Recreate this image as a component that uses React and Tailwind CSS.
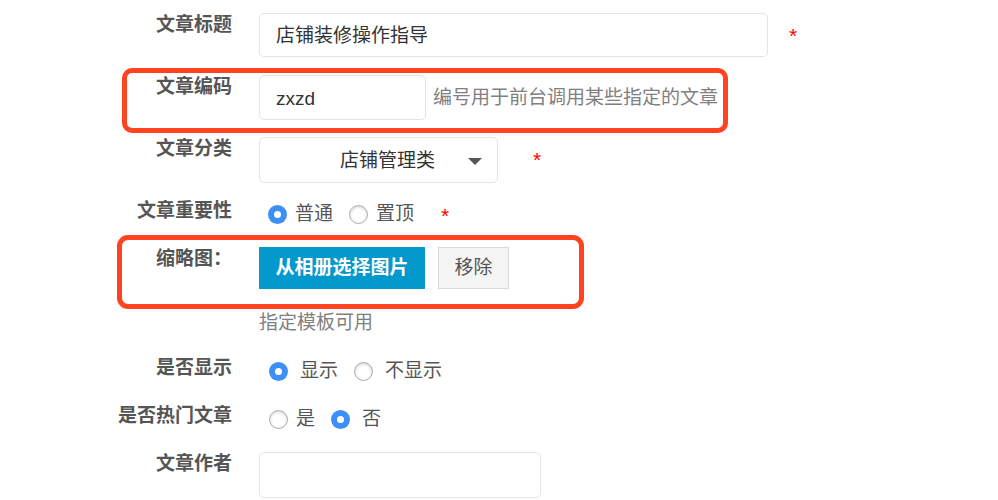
import React from 'react';

const font = { fontFamily: '"Liberation Sans", "Noto Sans CJK SC", sans-serif' };

const Label = ({ children }) => (
    <div className="w-[132px] shrink-0 text-right text-[19px] leading-[24px] font-semibold text-[#555]">
        {children}
    </div>
);

const Star = ({ className = '' }) => (
    <span className={`text-[21px] leading-none text-[#ff0000] ${className}`}>*</span>
);

const Radio = ({ checked }) =>
    checked ? (
        <span className="w-[19px] h-[19px] rounded-full bg-[#3b8ff6] flex items-center justify-center shrink-0">
            <span className="w-[7px] h-[7px] rounded-full bg-white" />
        </span>
    ) : (
        <span className="w-[19px] h-[19px] rounded-full bg-white border border-[#adadad] shadow-[inset_0_1px_3px_rgba(0,0,0,0.2)] shrink-0" />
    );

const Option = ({ checked, label, gap = 'ml-[8px]', className = '' }) => (
    <div className={`flex items-center ${className}`}>
        <Radio checked={checked} />
        <span className={`${gap} text-[19px] leading-[24px] text-[#555]`}>{label}</span>
    </div>
);

export default function App() {
    return (
        <div className="relative w-[998px] h-[500px] bg-white overflow-hidden" style={font}>
            <div className="pl-[100px] pt-[13px]">
                {/* 文章标题 */}
                <div className="flex items-start">
                    <Label>文章标题</Label>
                    <div className="ml-[27px] w-[509px] h-[44px] border border-[#dfe5e8] rounded-[5px] flex items-center pl-[16px] pt-[3px] text-[19px] text-[#333]">
                        店铺装修操作指导
                    </div>
                    <Star className="ml-[21px] mt-[12px]" />
                </div>

                {/* 文章编码 */}
                <div className="flex items-start mt-[18px]">
                    <Label>文章编码</Label>
                    <div className="ml-[27px] w-[167px] h-[45px] border border-[#dfe5e8] rounded-[5px] flex items-center pl-[16px] pt-[3px] text-[19px] text-[#333]">
                        zxzd
                    </div>
                    <span className="ml-[7px] mt-[11px] text-[19px] leading-[24px] text-[#808080]">编号用于前台调用某些指定的文章</span>
                </div>

                {/* 文章分类 */}
                <div className="flex items-start mt-[17px]">
                    <Label>文章分类</Label>
                    <div className="ml-[27px] w-[239px] h-[46px] border border-[#dfe5e8] rounded-[5px] flex items-center pt-[2px] text-[19px] text-[#333]">
                        <span className="ml-[80px]">店铺管理类</span>
                        <span className="ml-[33px] w-0 h-0 border-l-[7px] border-r-[7px] border-t-[7px] border-l-transparent border-r-transparent border-t-[#555]" />
                    </div>
                    <Star className="ml-[35px] mt-[12px]" />
                </div>

                {/* 文章重要性 */}
                <div className="flex items-start mt-[16px]">
                    <Label>文章重要性</Label>
                    <div className="ml-[36px] pt-[3px] flex items-center">
                        <Option checked label="普通" />
                        <Option label="置顶" className="ml-[16px]" />
                        <Star className="ml-[27px] mt-[2px]" />
                    </div>
                </div>

                {/* 缩略图 */}
                <div className="flex items-start mt-[21px]">
                    <Label>缩略图：</Label>
                    <div className="ml-[27px] flex">
                        <button className="h-[42px] w-[166px] bg-[#0399cc] text-white text-[19px] font-semibold">
                            从相册选择图片
                        </button>
                        <button className="ml-[13px] h-[42px] w-[71px] bg-[#f5f5f5] border border-[#dcdcdc] text-[#555] text-[19px]">
                            移除
                        </button>
                    </div>
                </div>

                <div className="ml-[159px] mt-[22px] text-[19px] leading-[24px] text-[#808080]">指定模板可用</div>

                {/* 是否显示 */}
                <div className="flex items-start mt-[21px]">
                    <Label>是否显示</Label>
                    <div className="ml-[37px] pt-[3px] flex items-center">
                        <Option checked label="显示" gap="ml-[12px]" />
                        <Option label="不显示" gap="ml-[12px]" className="ml-[16px]" />
                    </div>
                </div>

                {/* 是否热门文章 */}
                <div className="flex items-start mt-[21px]">
                    <Label>是否热门文章</Label>
                    <div className="ml-[37px] pt-[3px] flex items-center">
                        <Option label="是" />
                        <Option checked label="否" gap="ml-[12px]" className="ml-[16px]" />
                    </div>
                </div>

                {/* 文章作者 */}
                <div className="flex items-start mt-[21px]">
                    <Label>文章作者</Label>
                    <div className="ml-[27px] w-[282px] h-[46px] border border-[#dfe5e8] rounded-[5px]" />
                </div>
            </div>

            {/* annotation boxes */}
            <div className="absolute left-[122px] top-[68px] w-[606px] h-[65px] border-[5px] border-[#ff4321] rounded-[10px]" />
            <div className="absolute left-[117px] top-[235px] w-[467px] h-[74px] border-[5px] border-[#ff4321] rounded-[11px]" />
        </div>
    );
}
